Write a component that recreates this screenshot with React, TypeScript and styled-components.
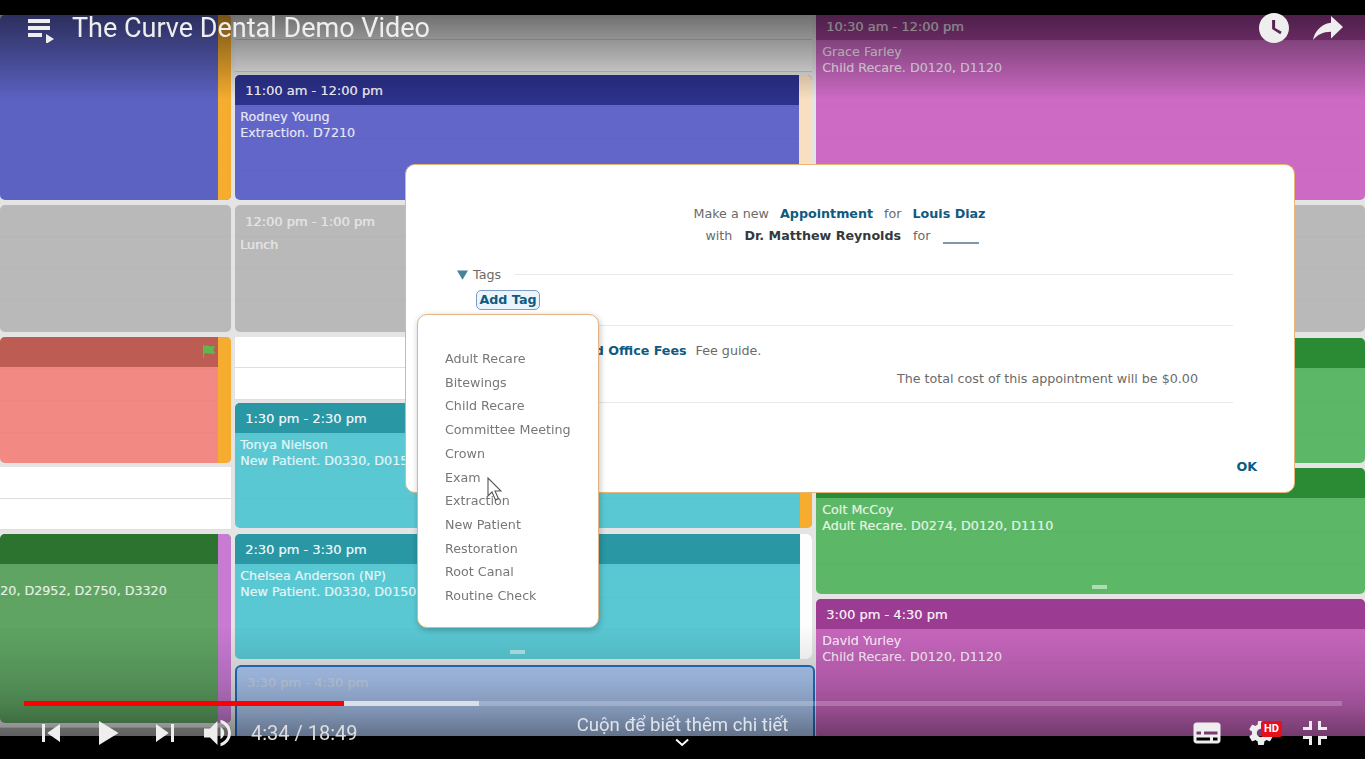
import React from "react";
import styled, { createGlobalStyle } from "styled-components";

const Global = createGlobalStyle`
  * { box-sizing: border-box; }
  html, body { margin: 0; padding: 0; background: #000; overflow: hidden; }
`;

const Player = styled.div`
  position: relative;
  width: 1365px;
  height: 759px;
  padding-top: 15px;
  background: #000;
  overflow: hidden;
`;

const Frame = styled.div`
  position: relative;
  height: 721px;
  overflow: hidden;
`;

const Calendar = styled.div`
  display: grid;
  grid-template-columns: 231px 577px 549px;
  column-gap: 4px;
  height: 100%;
  background: #e4e4e4;
  filter: blur(0.5px);
`;

const Column = styled.div`
  display: flex;
  flex-direction: column;
  min-width: 0;
`;

const Appt = styled.div<{ $h: number; $gap?: number; $bg: string }>`
  display: flex;
  flex: none;
  height: ${(p) => p.$h}px;
  margin-top: ${(p) => p.$gap ?? 0}px;
  background: ${(p) => p.$bg};
  background-image: repeating-linear-gradient(
    to bottom,
    transparent 0,
    transparent 31px,
    rgba(0, 0, 0, 0.02) 31px,
    rgba(0, 0, 0, 0.02) 32px
  );
  border-radius: 5px;
  overflow: hidden;
`;

const Main = styled.div`
  position: relative;
  flex: 1;
  min-width: 0;
`;

const Strip = styled.div<{ $w: number; $bg: string }>`
  flex: none;
  width: ${(p) => p.$w}px;
  background: ${(p) => p.$bg};
`;

const Head = styled.div<{ $bg?: string; $color?: string; $shift?: number }>`
  position: relative;
  display: flex;
  align-items: center;
  height: 30px;
  padding: ${(p) => p.$shift ?? 0}px 0 0 10px;
  background: ${(p) => p.$bg ?? "transparent"};
  color: ${(p) => p.$color ?? "rgba(255, 255, 255, 0.74)"};
  font: 13px/1 "DejaVu Sans", sans-serif;
  text-shadow: 0.4px 0 0 currentColor;
  white-space: nowrap;
`;

const Body = styled.div<{ $pad?: number; $top?: number }>`
  padding: ${(p) => p.$top ?? 4}px 0 0 ${(p) => p.$pad ?? 5}px;
`;

const Line = styled.div<{ $color?: string }>`
  height: 16px;
  color: ${(p) => p.$color ?? "rgba(255, 255, 255, 0.62)"};
  font: 12.7px/16px "DejaVu Sans", sans-serif;
  text-shadow: 0.5px 0 0 currentColor;
  white-space: nowrap;
`;

const Handle = styled.div<{ $nudge?: number }>`
  position: absolute;
  left: 50%;
  bottom: 5px;
  width: 15px;
  height: 4px;
  margin-left: ${(p) => (p.$nudge ?? 0) - 8}px;
  background: rgba(255, 255, 255, 0.5);
`;

const Flag = styled.svg`
  position: absolute;
  right: 1px;
  top: 8px;
`;

const Slot = styled.div<{ $h: number; $gap?: number }>`
  flex: none;
  height: ${(p) => p.$h}px;
  margin-top: ${(p) => p.$gap ?? 0}px;
  background: #fff;
  border-bottom: 1px solid #dedede;
`;

const TopSlot = styled(Slot)`
  background: #e9e9e9;
  border-bottom-color: #c9c9c9;
`;

const Selected = styled(Appt)`
  margin-right: -3px;
  border: 2px solid #1f6fc0;
  border-radius: 6px;
`;

const Tail = styled.div<{ $gap: number }>`
  flex: 1;
  margin-top: ${(p) => p.$gap}px;
  background: #a6a6a6;
  border-top: 1px solid #cfcfcf;
`;

const Modal = styled.div`
  position: absolute;
  left: 405px;
  top: 149px;
  display: flex;
  flex-direction: column;
  width: 890px;
  height: 329px;
  padding: 38px 61px 0 51px;
  background: #fff;
  border: 1px solid #e6b577;
  border-radius: 10px;
  color: #6a6a6a;
  font: 12.7px/20px "DejaVu Sans", sans-serif;
`;

const Heading = styled.div<{ $gap: number; $mr: number }>`
  display: flex;
  justify-content: center;
  gap: ${(p) => p.$gap}px;
  height: 22px;
  margin-right: ${(p) => p.$mr}px;
  line-height: 22px;
  white-space: nowrap;
`;

const Strong = styled.b<{ $dark?: boolean }>`
  font-weight: 700;
  color: ${(p) => (p.$dark ? "#33393d" : "#0f5a80")};
`;

const Blank = styled.span`
  width: 36px;
  height: 18px;
  margin-top: 1px;
  border-bottom: 2px solid #7d98ad;
`;

const Section = styled.div`
  display: flex;
  align-items: center;
  height: 20px;
  margin-top: 18px;
`;

const SectionLabel = styled.span`
  margin: 0 14px 0 5px;
`;

const Rule = styled.div`
  flex: 1;
  height: 1px;
  background: #e8e8e8;
`;

const SectionRule = styled(Rule)`
  margin-bottom: 2px;
`;

const Divider = styled(Rule)<{ $gap: number }>`
  flex: none;
  margin-top: ${(p) => p.$gap}px;
`;

const AddTag = styled.button`
  align-self: flex-start;
  width: 64px;
  height: 20px;
  margin: 5px 0 0 19px;
  padding: 0;
  background: #ebf4fd;
  border: 1.5px solid #7c9cc6;
  border-radius: 5px;
  color: #0f5a80;
  font: 700 12.7px/16px "DejaVu Sans", sans-serif;
`;

const FeeRow = styled.div`
  display: flex;
  gap: 9px;
  height: 20px;
  margin: 15px 0 0 81px;
  white-space: nowrap;
`;

const Total = styled.div`
  height: 20px;
  margin: 8px 35px 0 0;
  text-align: right;
`;

const Ok = styled(Strong)`
  align-self: flex-end;
  height: 20px;
  margin: 54px -24px 0 0;
`;

const Popup = styled.div`
  position: absolute;
  left: 417px;
  top: 299px;
  width: 182px;
  height: 314px;
  padding: 32px 0 0 27px;
  background: #fff;
  border: 1.5px solid #e0b583;
  border-radius: 10px;
  box-shadow: 1px 2px 6px rgba(0, 0, 0, 0.25);
`;

const TagList = styled.ul`
  margin: 0;
  padding: 0;
  list-style: none;
  color: #777;
  font: 12.7px/23.7px "DejaVu Sans", sans-serif;
  white-space: nowrap;
`;

const Cursor = styled.svg`
  position: absolute;
  left: 69px;
  top: 162px;
`;

const TopShade = styled.div`
  position: absolute;
  top: 0;
  left: 0;
  right: 0;
  height: 84px;
  background: linear-gradient(to bottom, rgba(0, 0, 0, 0.52), rgba(0, 0, 0, 0));
  pointer-events: none;
`;

const BottomShade = styled.div`
  position: absolute;
  bottom: 0;
  left: 0;
  right: 0;
  height: 110px;
  background: linear-gradient(
    to bottom,
    rgba(0, 0, 0, 0) 0%,
    rgba(0, 0, 0, 0.12) 49%,
    rgba(0, 0, 0, 0.22) 72%,
    rgba(0, 0, 0, 0.42) 100%
  );
  pointer-events: none;
`;

const TopBar = styled.div`
  position: absolute;
  top: 1px;
  left: 28px;
  right: 10px;
  display: flex;
  align-items: flex-start;
`;

const Title = styled.div`
  margin: 9px auto 0 18px;
  color: #eee;
  font: 27px/36px Roboto, sans-serif;
  white-space: nowrap;
`;

const Controls = styled.div`
  position: absolute;
  top: 701px;
  left: 0;
  right: 0;
`;

const Track = styled.div`
  display: flex;
  height: 5px;
  margin: 0 23px 0 24px;
  background: rgba(255, 255, 255, 0.2);
`;

const Progress = styled.div<{ $w: number; $bg: string }>`
  width: ${(p) => p.$w}px;
  background: ${(p) => p.$bg};
`;

const ControlRow = styled.div`
  position: relative;
  display: flex;
  align-items: flex-start;
  height: 54px;
  padding: 0 23px 0 24px;
`;

const Time = styled.div`
  margin: 15px auto 0 5px;
  color: #ddd;
  font: 20px/24px Roboto, sans-serif;
  white-space: nowrap;
`;

const Hint = styled.div`
  position: absolute;
  left: 50%;
  top: 8px;
  display: flex;
  flex-direction: column;
  align-items: center;
  transform: translateX(-50%);
  color: #dfe3ea;
  font: 18.6px/22px Roboto, sans-serif;
  white-space: nowrap;
`;

const Chevron = styled.svg`
  margin-top: 2px;
`;

const Settings = styled.div`
  position: relative;
  width: 54px;
  height: 54px;
`;

const HdBadge = styled.span`
  position: absolute;
  left: 27px;
  top: 15px;
  width: 21px;
  height: 16px;
  background: #e5101c;
  border-radius: 2px;
  color: #fff;
  font: 700 11px/16px Roboto, sans-serif;
  text-align: center;
`;

const IconSvg = styled.svg<{ $after?: number }>`
  flex: none;
  margin-right: ${(p) => p.$after ?? 0}px;
  fill: #eee;
`;

const Icon = ({ d, after }: { d: string; after?: number }) => (
  <IconSvg width="54" height="54" viewBox="0 0 36 36" $after={after}>
    <path d={d} />
  </IconSvg>
);

const tags = [
  "Adult Recare",
  "Bitewings",
  "Child Recare",
  "Committee Meeting",
  "Crown",
  "Exam",
  "Extraction",
  "New Patient",
  "Restoration",
  "Root Canal",
  "Routine Check",
];

const gear =
  "m 23.94,18.78 c .03,-0.25 .05,-0.51 .05,-0.78 0,-0.27 -0.02,-0.52 -0.05,-0.78 l 1.68,-1.32 c .15,-0.12 .19,-0.33 .09,-0.51 l -1.6,-2.76 c -0.09,-0.17 -0.31,-0.24 -0.48,-0.17 l -1.99,.8 c -0.41,-0.32 -0.86,-0.58 -1.35,-0.78 l -0.30,-2.12 c -0.02,-0.19 -0.19,-0.33 -0.39,-0.33 l -3.2,0 c -0.2,0 -0.36,.14 -0.39,.33 l -0.30,2.12 c -0.48,.2 -0.93,.47 -1.35,.78 l -1.99,-0.8 c -0.18,-0.07 -0.39,0 -0.48,.17 l -1.6,2.76 c -0.10,.17 -0.05,.39 .09,.51 l 1.68,1.32 c -0.03,.25 -0.05,.52 -0.05,.78 0,.26 .02,.52 .05,.78 l -1.68,1.32 c -0.15,.12 -0.19,.33 -0.09,.51 l 1.6,2.76 c .09,.17 .31,.24 .48,.17 l 1.99,-0.8 c .41,.32 .86,.58 1.35,.78 l .30,2.12 c .02,.19 .19,.33 .39,.33 l 3.2,0 c .2,0 .36,-0.14 .39,-0.33 l .30,-2.12 c .48,-0.2 .93,-0.47 1.35,-0.78 l 1.99,.8 c .18,.07 .39,0 .48,-0.17 l 1.6,-2.76 c .09,-0.17 .05,-0.39 -0.09,-0.51 l -1.68,-1.32 0,0 z m -5.94,2.01 c -1.54,0 -2.8,-1.25 -2.8,-2.8 0,-1.54 1.25,-2.8 2.8,-2.8 1.54,0 2.8,1.25 2.8,2.8 0,1.54 -1.25,2.8 -2.8,2.8 l 0,0 z";

export default function App() {
  return (
    <>
      <Global />
      <Player>
        <Frame>
          <Calendar>
            <Column>
              <Appt $h={185} $bg="#5c62c2">
                <Main />
                <Strip $w={13} $bg="#f5ac2f" />
              </Appt>
              <Appt $h={127} $gap={5} $bg="#b9b9b9" />
              <Appt $h={126} $gap={5} $bg="#f28a83">
                <Main>
                  <Head $bg="#bc5c52">
                    <Flag width="15" height="13" viewBox="0 0 15 13">
                      <path d="M1 0h1.2v13H1zM2.2 1c3-1.400 6 1.200 11 0l-2 4 2 3.500c-5 1-8-1.200-11 0z" fill="#5db84e" />
                    </Flag>
                  </Head>
                </Main>
                <Strip $w={13} $bg="#f5ac2f" />
              </Appt>
              <Slot $h={32} $gap={4} />
              <Slot $h={31} />
              <Appt $h={189} $gap={4} $bg="#5fa463">
                <Main>
                  <Head $bg="#2c732f" />
                  <Body $pad={0} $top={19}>
                    <Line>20, D2952, D2750, D3320</Line>
                  </Body>
                </Main>
                <Strip $w={13} $bg="#c77bd3" />
              </Appt>
              <Tail $gap={4} />
            </Column>

            <Column>
              <TopSlot $h={25} />
              <TopSlot $h={32} />
              <Appt $h={125} $gap={3} $bg="#6166c8">
                <Main>
                  <Head $bg="#2d318b">11:00 am - 12:00 pm</Head>
                  <Body>
                    <Line>Rodney Young</Line>
                    <Line>Extraction. D7210</Line>
                  </Body>
                </Main>
                <Strip $w={13} $bg="#f8dfbf" />
              </Appt>
              <Appt $h={127} $gap={5} $bg="#b9b9b9">
                <Main>
                  <Head $color="#e2e2e2" $shift={2}>12:00 pm - 1:00 pm</Head>
                  <Body $top={2}>
                    <Line $color="#e2e2e2">Lunch</Line>
                  </Body>
                </Main>
              </Appt>
              <Slot $h={31} $gap={5} />
              <Slot $h={32} />
              <Appt $h={125} $gap={3} $bg="#5ac8d3">
                <Main>
                  <Head $bg="#2a97a5">1:30 pm - 2:30 pm</Head>
                  <Body>
                    <Line>Tonya Nielson</Line>
                    <Line>New Patient. D0330, D0150</Line>
                  </Body>
                </Main>
                <Strip $w={12} $bg="#f5ac2f" />
              </Appt>
              <Appt $h={125} $gap={6} $bg="#5ac8d3">
                <Main>
                  <Head $bg="#2a97a5">2:30 pm - 3:30 pm</Head>
                  <Body>
                    <Line>Chelsea Anderson (NP)</Line>
                    <Line>New Patient. D0330, D0150</Line>
                  </Body>
                  <Handle />
                </Main>
                <Strip $w={12} $bg="#fdfdfd" />
              </Appt>
              <Selected $h={100} $gap={6} $bg="#abc6f0">
                <Main>
                  <Head $color="#c4d2ea">3:30 pm - 4:30 pm</Head>
                  <Body $top={3} $pad={3}>
                    <Line $color="#b4c4df">Louis Diaz (NP)</Line>
                  </Body>
                </Main>
              </Selected>
            </Column>

            <Column>
              <Appt $h={190} $gap={-5} $bg="#cc6ac4">
                <Main>
                  <Head $bg="#a3429a" $shift={2}>10:30 am - 12:00 pm</Head>
                  <Body $pad={6}>
                    <Line>Grace Farley</Line>
                    <Line>Child Recare. D0120, D1120</Line>
                  </Body>
                </Main>
              </Appt>
              <Appt $h={127} $gap={5} $bg="#b9b9b9" />
              <Appt $h={125} $gap={6} $bg="#5cb866">
                <Main>
                  <Head $bg="#2b8a34" />
                </Main>
              </Appt>
              <Appt $h={126} $gap={5} $bg="#5cb866">
                <Main>
                  <Head $bg="#2b8a34" />
                  <Body $pad={6}>
                    <Line>Colt McCoy</Line>
                    <Line>Adult Recare. D0274, D0120, D1110</Line>
                  </Body>
                  <Handle $nudge={9} />
                </Main>
              </Appt>
              <Appt $h={140} $gap={5} $bg="#c766bd">
                <Main>
                  <Head $bg="#9c3b92">3:00 pm - 4:30 pm</Head>
                  <Body $pad={6}>
                    <Line>David Yurley</Line>
                    <Line>Child Recare. D0120, D1120</Line>
                  </Body>
                </Main>
              </Appt>
            </Column>

            <Modal>
              <Heading $gap={11} $mr={11}>
                <span>Make a new</span>
                <Strong>Appointment</Strong>
                <span>for</span>
                <Strong>Louis Diaz</Strong>
              </Heading>
              <Heading $gap={12} $mr={6}>
                <span>with</span>
                <Strong $dark>Dr. Matthew Reynolds</Strong>
                <span>for</span>
                <Blank />
              </Heading>
              <Section>
                <svg width="11" height="10" viewBox="0 0 11 10">
                  <path d="M0 0.500h11L5.500 9.800z" fill="#4a8298" />
                </svg>
                <SectionLabel>Tags</SectionLabel>
                <SectionRule />
              </Section>
              <AddTag>Add Tag</AddTag>
              <Divider $gap={15} />
              <FeeRow>
                <Strong>Standard Office Fees</Strong>
                <span>Fee guide.</span>
              </FeeRow>
              <Total>The total cost of this appointment will be $0.00</Total>
              <Divider $gap={13} />
              <Ok>OK</Ok>
            </Modal>

            <Popup>
              <TagList>
                {tags.map((tag) => (
                  <li key={tag}>{tag}</li>
                ))}
              </TagList>
              <Cursor width="15" height="25" viewBox="0 0 15 25">
                <path
                  d="M1 1v18l4-4 3.500 8 3-1.300L8 14h6z"
                  fill="rgba(255,255,255,0.6)"
                  stroke="#555"
                  strokeWidth="1.100"
                />
              </Cursor>
            </Popup>
          </Calendar>
          <TopShade />
          <BottomShade />
        </Frame>

        <TopBar>
          <svg width="26" height="42" viewBox="0 0 26 42" fill="#eee">
            <path d="M0 18h22v4H0zM0 25h22v4H0zM0 32h14v4H0zM18 33l8 5-8 5z" />
          </svg>
          <Title>The Curve Dental Demo Video</Title>
          <Icon d="M18,8 C12.47,8 8,12.47 8,18 C8,23.52 12.47,28 18,28 C23.52,28 28,23.52 28,18 C28,12.47 23.52,8 18,8 L18,8 Z M16.74,18.74 L16.74,12.74 L18.74,12.74 L18.74,17.92 L23.16,20.54 L22.13,22.21 L16.74,18.74 Z" />
          <Icon d="M20 14.500V10l8 7.300-8 7.700v-4.500c-5.500 0-9 2-12 5.500 1-5 4.500-10.500 12-11.500z" />
        </TopBar>

        <Controls>
          <Track>
            <Progress $w={320} $bg="#f00" />
            <Progress $w={135} $bg="rgba(255, 255, 255, 0.6)" />
          </Track>
          <ControlRow>
            <Hint>
              <span>Cuộn để biết thêm chi tiết</span>
              <Chevron width="14" height="9" viewBox="0 0 14 9">
                <path d="M1 1.500l6 5.500 6-5.500" fill="none" stroke="#fff" strokeWidth="2" />
              </Chevron>
            </Hint>
            <Icon after={3} d="m 12,12 h 2 v 12 h -2 z m 3.5,6 8.5,6 V 12 z" />
            <Icon after={3} d="M 12,26 18.5,22 18.5,14 12,10 z M 18.5,22 25,18 25,18 18.5,14 z" />
            <Icon d="M 12,24 20.5,18 12,12 V 24 z M 22,12 v 12 h 2 V 12 h -2 z" />
            <Icon d="M8,21 L12,21 L17,26 L17,10 L12,15 L8,15 L8,21 Z M19,14 L19,22 C20.48,21.32 21.5,19.77 21.5,18 C21.5,16.26 20.48,14.74 19,14 ZM19,11.29 C21.89,12.15 24,14.83 24,18 C24,21.17 21.89,23.85 19,24.71 L19,26.77 C23.01,25.86 26,22.28 26,18 C26,13.72 23.01,10.14 19,9.23 L19,11.29 Z" />
            <Time>4:34 / 18:49</Time>
            <Icon d="M11,11 C9.9,11 9,11.9 9,13 L9,23 C9,24.1 9.9,25 11,25 L25,25 C26.1,25 27,24.1 27,23 L27,13 C27,11.9 26.1,11 25,11 L11,11 Z M11,17 L14,17 L14,19 L11,19 L11,17 Z M20,23 L11,23 L11,21 L20,21 L20,23 Z M25,23 L22,23 L22,21 L25,21 L25,23 Z M25,19 L16,19 L16,17 L25,17 L25,19 Z" />
            <Settings>
              <Icon d={gear} />
              <HdBadge>HD</HdBadge>
            </Settings>
            <Icon d="m 14,14 -4,0 0,2 6,0 0,-6 -2,0 0,4 0,0 z m 8,0 0,-4 -2,0 0,6 6,0 0,-2 -4,0 0,0 z m -2,12 2,0 0,-4 4,0 0,-2 -6,0 0,6 0,0 z m -10,-4 4,0 0,4 2,0 0,-6 -6,0 0,2 0,0 z" />
          </ControlRow>
        </Controls>
      </Player>
    </>
  );
}
